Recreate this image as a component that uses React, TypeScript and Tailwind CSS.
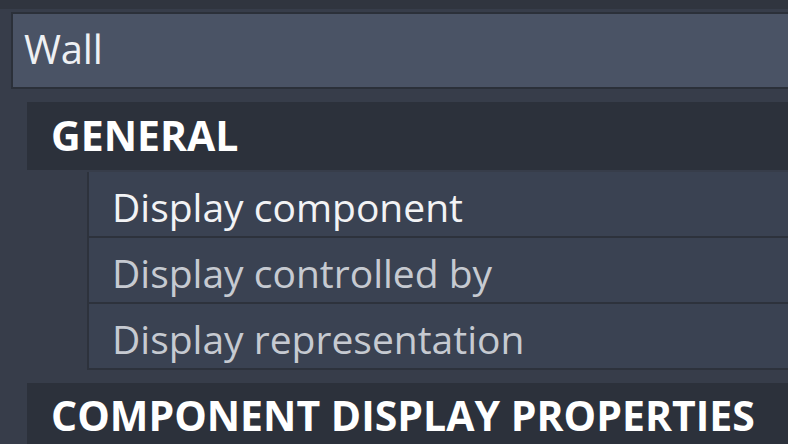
import React from 'react';

const rows = [
  { label: 'Display component', active: true },
  { label: 'Display controlled by', active: false },
  { label: 'Display representation', active: false },
];

function App() {
  return (
    <div className="w-[788px] h-[444px] overflow-hidden bg-[#373d4a] font-['Open_Sans',sans-serif]">
      <div className="h-[9px] bg-[#30353f]" />
      <div className="pl-[11px] pt-[3px]">
        <div className="h-[77px] border-2 border-r-0 border-[#2b3039] bg-[#4a5365] flex items-center pl-[11px] pb-[3px] text-[40px] text-[#eef0f3] tracking-[-0.2px]">
          Wall
        </div>
      </div>

      <div className="pl-[27px] mt-[13px]">
        <div className="h-[68px] bg-[#2c313b] flex items-center pl-[24px] font-bold text-[41px] text-white">
          GENERAL
        </div>
        <div className="pl-[60px] pt-[2px] bg-[#373d4a]">
          {rows.map((r) => (
            <div
              key={r.label}
              className="h-[66px] border-l-2 border-b-2 border-[#2d323c] bg-[#3a4252] flex items-center pl-[23px] pt-[6px]"
            >
              <span className={`text-[39px] ${r.active ? 'text-[#f2f3f5]' : 'text-[#c6cad1]'}`}>{r.label}</span>
            </div>
          ))}
        </div>
        <div className="mt-[13px] h-[68px] bg-[#2c313b] flex items-center pl-[24px] pb-[3px] font-bold text-[41px] text-white">
          COMPONENT DISPLAY PROPERTIES
        </div>
      </div>
    </div>
  );
}

export default App;
